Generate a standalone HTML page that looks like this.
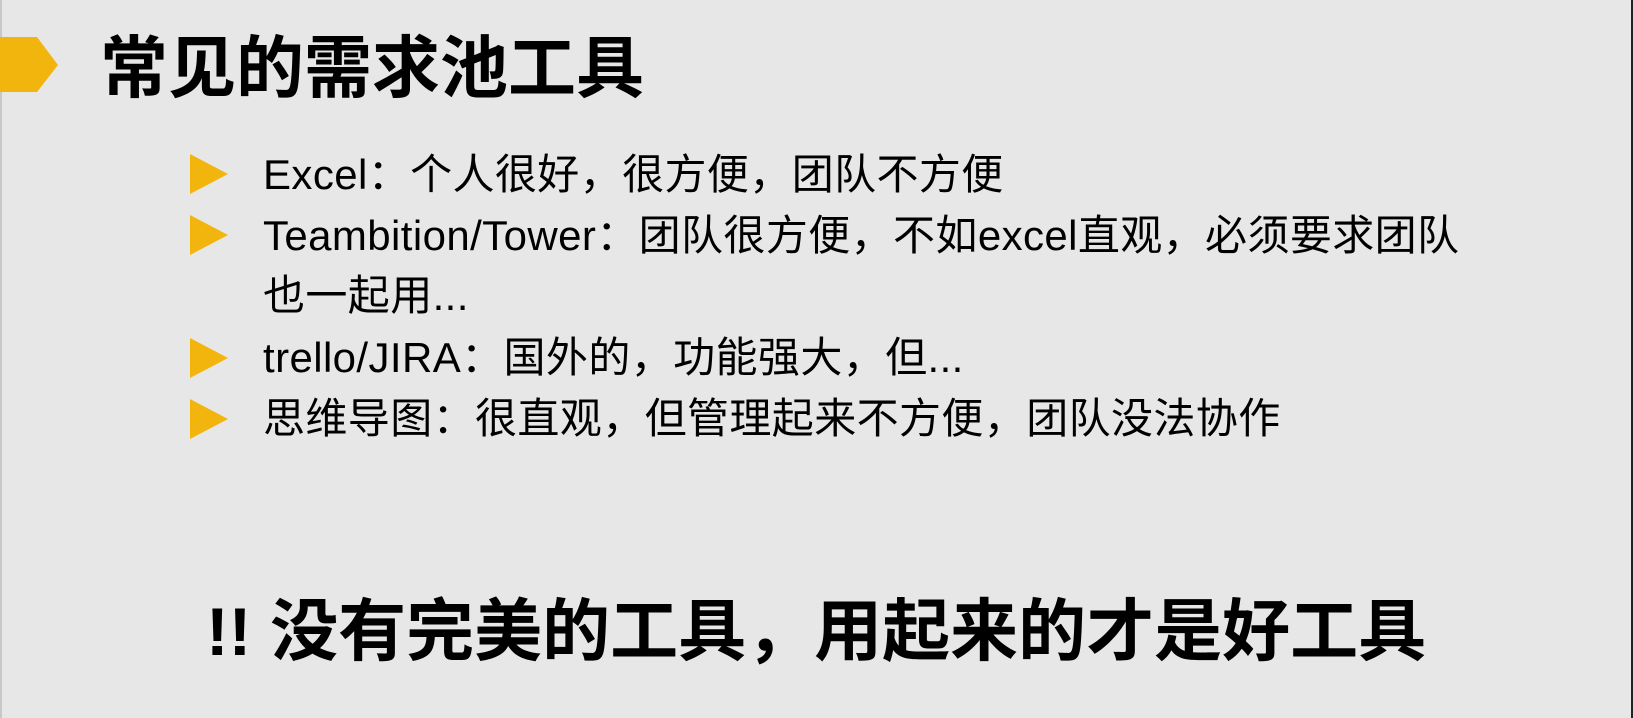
<!DOCTYPE html>
<html><head><meta charset="utf-8"><style>
html,body{margin:0;padding:0}
body{width:1633px;height:718px;background:#e7e7e7;position:relative;overflow:hidden;font-family:"Liberation Sans","Noto Sans CJK SC",sans-serif;color:#000}
.edge{position:absolute;top:0;bottom:0;width:2px}
.t{position:absolute;white-space:nowrap}
.tri{position:absolute;width:0;height:0;border-top:20px solid transparent;border-bottom:20px solid transparent;border-left:38px solid #f2b50e}
.b{font-size:42px;line-height:48px;left:263px;letter-spacing:0.4px}
</style></head><body>
<div class="edge" style="left:0;background:#c8c8c8"></div>
<div class="edge" style="right:0;background:#222"></div>
<svg style="position:absolute;left:0;top:36px" width="60" height="58"><polygon points="0,1 37,1 58,29 37,56 0,56" fill="#f2b50e"/></svg>
<div class="t" style="left:100px;top:31px;font-size:68px;line-height:76px;font-weight:bold">常见的需求池工具</div>

<div class="tri" style="left:190px;top:154px"></div>
<div class="t b" style="top:151px">Excel：个人很好，很方便，团队不方便</div>
<div class="tri" style="left:190px;top:215px"></div>
<div class="t b" style="top:212px">Teambition/Tower：团队很方便，不如excel直观，必须要求团队</div>
<div class="t b" style="top:272px">也一起用...</div>
<div class="tri" style="left:190px;top:338px"></div>
<div class="t b" style="top:334px">trello/JIRA：国外的，功能强大，但...</div>
<div class="tri" style="left:190px;top:399px"></div>
<div class="t b" style="top:395px">思维导图：很直观，但管理起来不方便，团队没法协作</div>

<div class="t" style="left:206px;top:594px;font-size:68px;line-height:76px;font-weight:bold">!! 没有完美的工具，用起来的才是好工具</div>
</body></html>
